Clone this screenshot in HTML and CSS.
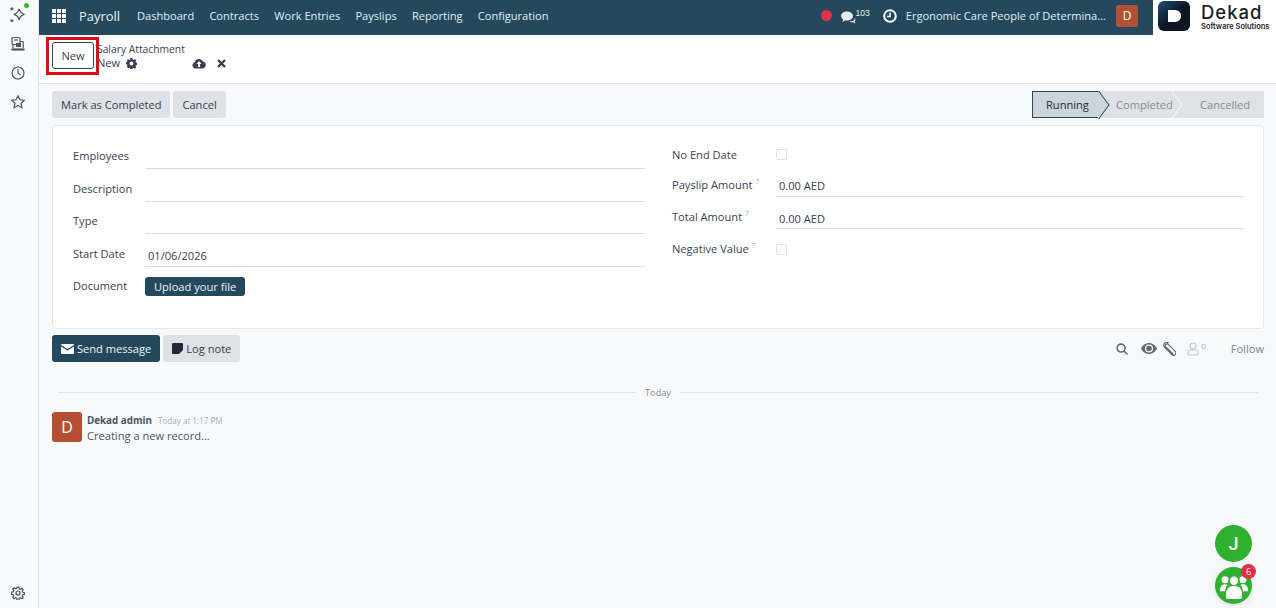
FILE: index.html
```html
<!DOCTYPE html>
<html lang="en">
<head>
<meta charset="utf-8">
<title>Salary Attachment</title>
<link rel="stylesheet" href="styles.css">
</head>
<body>
<div class="app">
  <aside class="rail">
    <div class="rail-top">
      <span class="rail-icon first">
        <svg width="20" height="20" viewBox="0 0 18 18" fill="none" stroke="#4b5563" stroke-width="1.100"><path d="M10 3.500c.6 2.800 2 4.200 4.800 4.900-2.800.7-4.200 2.100-4.800 4.900-.6-2.800-2-4.200-4.800-4.900 2.800-.7 4.200-2.100 4.800-4.900z"/><path d="M3.500 2v3M2 3.500h3M3.500 12.500v3M2 14h3"/></svg>
        <i class="online"></i>
      </span>
      <span class="rail-icon">
        <svg width="16" height="16" viewBox="0 0 16 16" fill="none" stroke="#4b5563" stroke-width="1.200"><rect x="2" y="1.500" width="8" height="7" rx="1"/><path d="M4 4h4"/><path d="M10 5.500h2.500a.7.7 0 01.7.7V12M3 8.500V12"/><rect x="6" y="7" width="5" height="4" fill="#4b5563" stroke="none"/><path d="M1.500 13.500h13" stroke-width="2.200"/></svg>
      </span>
      <span class="rail-icon">
        <svg width="16" height="16" viewBox="0 0 16 16" fill="none" stroke="#4b5563" stroke-width="1.200"><circle cx="8" cy="8" r="6"/><path d="M8 4v4l2.500 2"/></svg>
      </span>
      <span class="rail-icon">
        <svg width="16" height="16" viewBox="0 0 16 16" fill="none" stroke="#4b5563" stroke-width="1.200"><path d="M8 1.800l1.900 4 4.400.5-3.300 3 .9 4.400L8 11.500l-3.900 2.200.9-4.400-3.300-3 4.400-.5z"/></svg>
      </span>
    </div>
    <span class="rail-icon">
      <svg width="14" height="14" viewBox="0 0 16 16" fill="none" stroke="#4b5563" stroke-width="1.400"><circle cx="8" cy="8" r="2.300"/><path d="M7 1.200h2l.4 2 1.300.6 1.800-1.100 1.400 1.400-1.100 1.800.6 1.300 2 .4v2l-2 .4-.6 1.300 1.100 1.800-1.400 1.400-1.800-1.100-1.300.6-.4 2H7l-.4-2-1.300-.6-1.800 1.100-1.400-1.400 1.100-1.800-.6-1.300-2-.4V7l2-.4.6-1.300-1.100-1.800 1.400-1.400 1.800 1.100 1.300-.6z"/></svg>
    </span>
  </aside>

  <div class="main">
    <header class="navbar">
      <div class="nav-left">
        <svg class="apps" width="14" height="14" viewBox="0 0 14 14" fill="#fff"><rect width="4" height="4"/><rect x="5" width="4" height="4"/><rect x="10" width="4" height="4"/><rect y="5" width="4" height="4"/><rect x="5" y="5" width="4" height="4"/><rect x="10" y="5" width="4" height="4"/><rect y="10" width="4" height="4"/><rect x="5" y="10" width="4" height="4"/><rect x="10" y="10" width="4" height="4"/></svg>
        <span class="brand">Payroll</span>
        <nav class="menu">
          <a>Dashboard</a><a>Contracts</a><a>Work Entries</a><a>Payslips</a><a>Reporting</a><a>Configuration</a>
        </nav>
      </div>
      <div class="nav-right">
        <i class="rec"></i>
        <span class="chat">
          <svg width="15" height="13" viewBox="0 0 15 13" fill="#e9edf0"><ellipse cx="6" cy="5" rx="6" ry="4.500"/><path d="M2.500 7.500L1.500 11l4-2.500z"/><path d="M8.500 10.500c2.500 0 5-.9 5.500-3.500.6 1.500.5 3-.3 3.800l.8 1.700-2.500-1.200c-1.200.3-2.500.1-3.500-.8z"/></svg>
          <sup>103</sup>
        </span>
        <svg class="clock" width="14" height="14" viewBox="0 0 14 14" fill="none" stroke="#fff"><circle cx="7" cy="7" r="5.800" stroke-width="2"/><path d="M7 3.500V7.500H4" stroke-width="1.500"/></svg>
        <span class="company">Ergonomic Care People of Determina...</span>
        <span class="user-badge">D</span>
      </div>
      <div class="logo">
        <svg class="logo-mark" width="32" height="30" viewBox="0 0 32 30"><defs><linearGradient id="lg" x1="0" y1="0" x2="1" y2="1"><stop offset="0" stop-color="#1d4f80"/><stop offset=".5" stop-color="#0d1626"/><stop offset="1" stop-color="#10131c"/></linearGradient></defs><rect width="32" height="30" rx="6" fill="url(#lg)"/><path d="M10 9h6.500c4 0 6.500 2.400 6.500 6s-2.500 6-6.500 6H10z" fill="#fff"/></svg>
        <div class="logo-text"><b>Dekad</b><span>Software Solutions</span></div>
      </div>
    </header>

    <section class="control">
      <button class="btn-new">New</button>
      <div class="crumbs">
        <a>Salary Attachment</a>
        <div class="crumb-now">
          <span>New</span>
          <svg width="11" height="11" viewBox="0 0 16 16" fill="#374151"><path fill-rule="evenodd" d="M6.500 0h3l.4 2.200 1.300.6L13 1.500l2.100 2.100-1.300 1.800.6 1.300 2.200.4v3l-2.200.4-.6 1.300 1.300 1.800-2.100 2.100-1.800-1.300-1.300.6-.4 2.200h-3l-.4-2.200-1.300-.6L3 14.500.9 12.400l1.300-1.800-.6-1.300L-.6 8.900v-3l2.200-.4.600-1.300L.9 3.600 3 1.500l1.800 1.300 1.300-.6zM8 5.200a2.800 2.800 0 100 5.600 2.800 2.800 0 000-5.600z"/></svg>
          <svg class="save" width="14" height="11" viewBox="0 0 14 11" fill="#374151"><path fill-rule="evenodd" d="M3.500 10.500a3.200 3.200 0 01-.6-6.300A4.300 4.300 0 0111 3.600a3.500 3.500 0 01-.5 6.900zM7 3L4.500 6H6v3h2V6h1.500z"/></svg>
          <svg class="discard" width="9" height="9" viewBox="0 0 9 9" stroke="#374151" stroke-width="2.400"><path d="M1 1l7 7M8 1L1 8"/></svg>
        </div>
      </div>
      <div class="highlight"></div>
    </section>

    <main class="content">
      <div class="statusbar">
        <div class="actions">
          <button class="btn">Mark as Completed</button>
          <button class="btn">Cancel</button>
        </div>
        <div class="stages">
          <span class="stage current">Running</span>
          <span class="stage completed">Completed</span>
          <span class="stage cancelled">Cancelled</span>
        </div>
      </div>

      <div class="sheet">
        <div class="col col-left">
          <div class="row"><label>Employees</label><div class="input"></div></div>
          <div class="row"><label>Description</label><div class="input"></div></div>
          <div class="row"><label>Type</label><div class="input"></div></div>
          <div class="row"><label>Start Date</label><div class="input">01/06/2026</div></div>
          <div class="row"><label>Document</label><button class="upload">Upload your file</button></div>
        </div>
        <div class="col col-right">
          <div class="row plain first-plain"><label>No End Date</label><i class="check"></i></div>
          <div class="row after-plain"><label>Payslip Amount<sup>?</sup></label><div class="input">0.00 AED</div></div>
          <div class="row"><label>Total Amount<sup>?</sup></label><div class="input">0.00 AED</div></div>
          <div class="row plain last-plain"><label>Negative Value<sup>?</sup></label><i class="check"></i></div>
        </div>
      </div>

      <div class="chatter-bar">
        <div class="actions">
          <button class="btn primary">
            <svg width="13" height="10" viewBox="0 0 13 10" fill="#fff"><path d="M1 0h11a1 1 0 011 1L6.500 5 0 1a1 1 0 011-1z"/><path d="M0 2.500l6.500 4 6.500-4V9a1 1 0 01-1 1H1a1 1 0 01-1-1z"/></svg>
            Send message
          </button>
          <button class="btn">
            <svg width="11" height="11" viewBox="0 0 11 11" fill="#1f2937"><path d="M1 0h9a1 1 0 011 1v6L7 11H1a1 1 0 01-1-1V1a1 1 0 011-1z"/></svg>
            Log note
          </button>
        </div>
        <div class="tools">
          <svg width="12" height="12" viewBox="0 0 13 13" fill="none" stroke="#5f6b76" stroke-width="1.700"><circle cx="5.500" cy="5.500" r="4.300"/><path d="M8.500 8.500l4 4"/></svg>
          <svg class="eye" width="16" height="11" viewBox="0 0 16 11"><path fill="#5f6b76" fill-rule="evenodd" d="M8 0c3.500 0 6.500 2.300 8 5.500-1.500 3.200-4.500 5.500-8 5.500S1.500 8.700 0 5.500C1.500 2.300 4.500 0 8 0zm0 1.500a4 4 0 100 8 4 4 0 000-8z"/><circle cx="8" cy="5.500" r="2.800" fill="#5f6b76"/></svg>
          <svg class="clip" width="14" height="14" viewBox="0 0 14 14" fill="none" stroke="#5f6b76" stroke-width="1.200"><path d="M11.500 12.500L3.800 4.800a1.700 1.700 0 012.400-2.400l7 7a2.300 2.300 0 01-3.300 3.300L2.400 5.200A3 3 0 016.600 1"/></svg>
          <span class="followers">
            <svg width="12" height="14" viewBox="0 0 12 14" fill="none" stroke="#c3c8cd" stroke-width="1.200"><circle cx="6" cy="4" r="3"/><rect x="1" y="8" width="10" height="5" rx="1.500"/></svg>
            <sup>0</sup>
          </span>
          <span class="follow">Follow</span>
        </div>
      </div>

      <div class="divider"><span>Today</span></div>

      <div class="message">
        <span class="avatar">D</span>
        <div>
          <div class="msg-head"><b>Dekad admin</b><small>Today at 1:17 PM</small></div>
          <div class="msg-body">Creating a new record...</div>
        </div>
      </div>
    </main>
  </div>
</div>

<div class="fab fab-j">J</div>
<div class="fab fab-group">
  <svg width="32" height="32" viewBox="0 0 36 36" fill="#fff"><circle cx="8" cy="11" r="4"/><circle cx="28" cy="11" r="4"/><path d="M2 24c0-5 2-8 6-8 1 0 2 .2 2.800.7C9 18.500 8 21 8 24z"/><path d="M34 24c0-5-2-8-6-8-1 0-2 .2-2.800.7C27 18.500 28 21 28 24z"/><circle cx="18" cy="12" r="5.500" stroke="#2fb12f" stroke-width="1.500"/><path d="M9 31v-4c0-6 3.500-9 9-9s9 3 9 9v4c0 1-.5 1.500-1.500 1.500h-15C9.500 32.500 9 32 9 31z"/></svg>
  <span class="fab-badge">6</span>
</div>
</body>
</html>
```

FILE: styles.css
```css
* { box-sizing: border-box; }
html, body { margin: 0; height: 100%; overflow: hidden; }
body {
  font-family: "Open Sans", "Noto Sans", sans-serif;
  font-size: 11.100px;
  color: #374151;
  background: #f8f9fb;
}
button { font: inherit; border: 0; cursor: pointer; }

.app { display: flex; height: 608px; }

.rail {
  width: 39px;
  flex: none;
  background: #f9fafb;
  border-right: 1px solid #dee2e6;
  display: flex;
  flex-direction: column;
  justify-content: space-between;
  align-items: center;
  padding: 5px 3px 5px 0;
}
.rail-top { display: flex; flex-direction: column; gap: 9px; align-items: center; }
.rail-icon { position: relative; width: 20px; height: 20px; display: flex; align-items: center; justify-content: center; }
.online { position: absolute; top: -2px; right: -1px; width: 5px; height: 5px; border-radius: 50%; background: #3cb72d; }

.main { flex: 1; min-width: 0; display: flex; flex-direction: column; }

.navbar {
  height: 35px;
  flex: none;
  background: #24495f;
  color: #e6ecef;
  display: flex;
  align-items: flex-start;
  padding-left: 13px;
}
.nav-left, .nav-right { height: 31px; display: flex; align-items: center; }
.apps { flex: none; }
.brand { margin-left: 13px; font-size: 12.900px; color: #eef2f4; }
.menu { display: flex; gap: 15.200px; margin-left: 17px; }
.menu a { white-space: nowrap; }
.nav-right { margin-left: auto; }
.rec { width: 11px; height: 11px; border-radius: 50%; background: #e0314a; }
.chat { display: flex; align-items: flex-start; margin-left: 9px; }
.chat svg { margin-top: 3px; }
.chat sup { font-size: 8.500px; line-height: 10px; vertical-align: baseline; font-family: "Liberation Sans", sans-serif; }
.clock { margin-left: 13px; }
.company { margin-left: 9px; white-space: nowrap; }
.user-badge {
  margin-left: 10px;
  width: 22px;
  height: 22px;
  border-radius: 3px;
  background: #b54f31;
  color: #fff;
  display: flex;
  align-items: center;
  justify-content: center;
  font-size: 12px;
}
.logo {
  width: 123px;
  height: 35px;
  margin-left: 15px;
  background: #fff;
  display: flex;
  align-items: flex-start;
  padding: 1px 0 0 5px;
}
.logo-mark { flex: none; }
.logo-text { margin: 2px 0 0 11px; display: flex; flex-direction: column; gap: 2px; color: #1b1f27; }
.logo-text b { font: 500 18.500px/18px "Inter", sans-serif; letter-spacing: 1px; }
.logo-text span { font: 600 7.500px/8px "Inter", sans-serif; white-space: nowrap; }

.control {
  position: relative;
  height: 49px;
  flex: none;
  background: #fff;
  border-bottom: 1px solid #dee2e6;
  display: flex;
  padding: 7px 0 0 13px;
  align-items: flex-start;
}
.btn-new {
  width: 42px;
  height: 27px;
  background: #fff;
  border: 1px solid #24495f;
  border-radius: 3px;
  color: #374151;
  padding: 0;
}
.crumbs { margin-left: 3px; line-height: 14px; font-size: 10.300px; color: #374151; }
.crumb-now { display: flex; align-items: center; font-size: 11.100px; }
.crumb-now svg { margin-left: 6px; }
.crumb-now .save { margin-left: 55px; }
.crumb-now .discard { margin-left: 11px; }
.highlight {
  position: absolute;
  left: 7px;
  top: 2px;
  width: 53px;
  height: 38px;
  border: 3px solid #e00b14;
}

.content { flex: 1; padding: 7px 12px 0 13px; }
.statusbar { display: flex; justify-content: space-between; height: 27px; }
.actions { display: flex; gap: 3px; }
.btn {
  height: 27px;
  padding: 0 9px;
  background: #dee2e6;
  border-radius: 3px;
  color: #374151;
  display: flex;
  align-items: center;
  gap: 3px;
  white-space: nowrap;
}
.btn.primary { background: #24495f; color: #f1f4f6; }

.stages { display: flex; height: 27px; background: #dee2e6; width: 232px; position: relative; }
.stage {
  position: relative;
  display: flex;
  align-items: center;
  color: #858c94;
}
.stage.current {
  width: 67px;
  padding-left: 13px;
  color: #1f2937;
  background: #cdd5dc;
  border: 1px solid #24495f;
  border-right: 0;
}
.stage.current::after {
  content: "";
  position: absolute;
  top: 3px;
  right: -9.500px;
  width: 19px;
  height: 19px;
  background: #cdd5dc;
  border-top: 1px solid #24495f;
  border-right: 1px solid #24495f;
  transform: scaleX(.74) rotate(45deg);
}
.stage.completed { width: 84px; padding-left: 17px; }
.stage.cancelled { padding-left: 17px; white-space: nowrap; }
.stage.completed::after {
  content: "";
  position: absolute;
  top: 4px;
  right: 1.500px;
  width: 19px;
  height: 19px;
  border-top: 1px solid #f8f9fb;
  border-right: 1px solid #f8f9fb;
  transform: scaleX(.74) rotate(45deg);
}

.sheet {
  margin-top: 7px;
  height: 204px;
  background: #fff;
  border: 1px solid #e5e8eb;
  border-radius: 4px;
  display: grid;
  grid-template-columns: 572px 1fr;
  padding: 11px 19px 0 20px;
  column-gap: 27px;
}
.col { display: flex; flex-direction: column; }
.row { display: flex; align-items: flex-end; height: 32.500px; }
.row label { width: 72px; flex: none; line-height: 24px; color: #374151; white-space: nowrap; }
.col-left .row label { padding-bottom: 1px; }
.row sup { font-size: 8px; line-height: 0; color: #52bcd0; margin-left: 3px; vertical-align: 5px; }
.input {
  flex: 1;
  height: 22px;
  border-bottom: 1px solid #d8dcdf;
  padding: 2px 0 0 3px;
  line-height: 18px;
}
.col-left .row:first-child { height: 32px; }
.col-left .row:last-child .upload { margin-bottom: 3px; }
.upload {
  height: 19px;
  padding: 0 9px;
  background: #24495f;
  color: #f1f4f6;
  border-radius: 3px;
}
.col-right .row label { width: 104px; }
.col-right .input { padding-top: 3px; }
.col-right .after-plain .input { padding-top: 2px; }
.row.plain { align-items: center; }
.row.first-plain { height: 36px; }
.row.first-plain .check { margin-top: -2px; }
.row.after-plain { height: 23.500px; }
.row.last-plain { height: 40px; }
.check {
  width: 11px;
  height: 11px;
  border: 1px solid #dfe2e5;
  border-radius: 2px;
  background: #fff;
}

.chatter-bar {
  margin-top: 6px;
  display: flex;
  justify-content: space-between;
  align-items: center;
  height: 27px;
}
.tools { display: flex; align-items: center; color: #858c94; }
.eye { margin-left: 13px; }
.clip { margin-left: 5px; }
.followers { margin-left: 11px; display: flex; align-items: flex-start; height: 14px; }
.followers sup { font-size: 8px; line-height: 8px; margin-left: 2px; color: #a9afb5; vertical-align: baseline; }
.follow { margin-left: 25px; color: #7d858d; }

.divider {
  margin: 22px 6px 0;
  display: flex;
  align-items: center;
  gap: 9px;
  height: 16px;
  font-size: 9.200px;
  color: #858c94;
}
.divider::before, .divider::after { content: ""; flex: 1; height: 1px; background: #e3e6e9; }

.message { display: flex; gap: 5px; margin-top: 12px; }
.avatar {
  width: 30px;
  height: 30px;
  border-radius: 3px;
  background: #b54f31;
  color: #fff;
  display: flex;
  align-items: center;
  justify-content: center;
  font-size: 16px;
}
.msg-head { line-height: 14px; margin-top: 1px; }
.msg-head b { font-size: 9.800px; font-weight: 700; color: #4b5563; }
.msg-head small { font-size: 8.100px; color: #a9afb5; margin-left: 6px; }
.msg-body { line-height: 16px; color: #4b5563; }

.fab {
  position: fixed;
  left: 1215px;
  width: 37px;
  height: 37px;
  border-radius: 50%;
  background: #2fb12f;
  color: #fff;
  display: flex;
  align-items: center;
  justify-content: center;
}
.fab-j { top: 525px; font: 500 18px/37px Roboto, sans-serif; }
.fab-group { top: 567px; box-shadow: 0 1px 6px rgba(0,0,0,.12); }
.fab-badge {
  position: absolute;
  top: -3px;
  right: -4px;
  width: 15px;
  height: 15px;
  border-radius: 50%;
  background: #e0314a;
  color: #fff;
  font-size: 9px;
  display: flex;
  align-items: center;
  justify-content: center;
}
```
